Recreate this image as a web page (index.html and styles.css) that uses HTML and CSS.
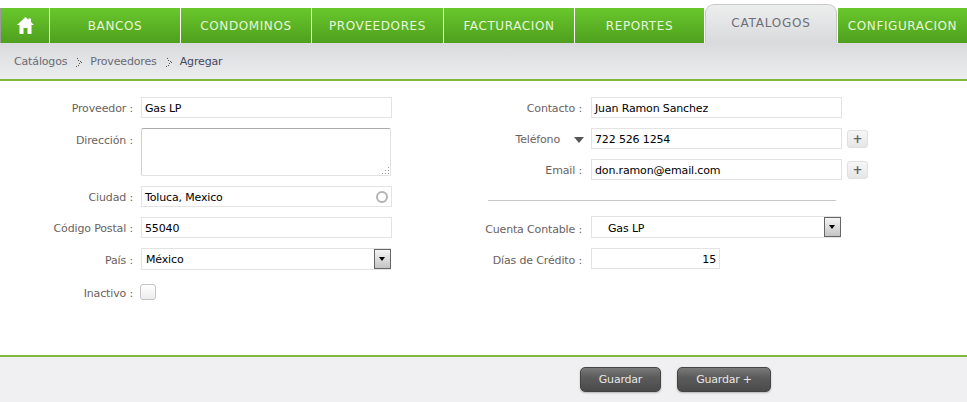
FILE: index.html
```html
<!DOCTYPE html>
<html lang="es">
  <head>
    <meta charset="UTF-8" />
    <title>Agregar proveedor</title>
    <link rel="stylesheet" href="styles.css">
  </head>
  <body>
    <nav class="nav">
      <a class="nav-item nav-home" href="#">
        <svg width="17" height="17" viewBox="0 0 17 17"><path d="M8.5 0 L11.5 2.7 V1.5 H14 V5 L17 8 H14.5 V17 H10.5 V11 H6.5 V17 H2.5 V8 H0 Z" fill="#fff"/></svg>
      </a>
      <a class="nav-item" href="#">BANCOS</a>
      <a class="nav-item" href="#">CONDOMINOS</a>
      <a class="nav-item" href="#">PROVEEDORES</a>
      <a class="nav-item" href="#">FACTURACION</a>
      <a class="nav-item" href="#">REPORTES</a>
      <a class="nav-item nav-active" href="#">CATALOGOS</a>
      <a class="nav-item nav-last" href="#">CONFIGURACION</a>
    </nav>

    <div class="crumbs">
      <a href="#">Catálogos</a>
      <svg class="crumb-sep" width="6" height="10" viewBox="0 0 6 10"><path d="M1 1h1v1H1zM2 3h1v1H2zM4 4h1v1H4zM5 5h1v1H5zM3 6h1v1H3zM2 8h1v1H2zM0 9h1v1H0z" fill="#555"/></svg>
      <a href="#">Proveedores</a>
      <svg class="crumb-sep" width="6" height="10" viewBox="0 0 6 10"><path d="M1 1h1v1H1zM2 3h1v1H2zM4 4h1v1H4zM5 5h1v1H5zM3 6h1v1H3zM2 8h1v1H2zM0 9h1v1H0z" fill="#555"/></svg>
      <span class="crumb-current">Agregar</span>
    </div>

    <form class="form">
      <div class="col col-left">
        <div class="row">
          <label class="lbl">Proveedor :</label>
          <div class="field w-full">Gas LP</div>
        </div>
        <div class="row row-top">
          <label class="lbl">Dirección :</label>
          <div class="area">
            <svg class="grip" width="9" height="9" viewBox="0 0 9 9"><path d="M7 1h1v1H7zM7 4h1v1H7zM4 4h1v1H4zM7 7h1v1H7zM4 7h1v1H4zM1 7h1v1H1z" fill="#999"/></svg>
          </div>
        </div>
        <div class="row">
          <label class="lbl">Ciudad :</label>
          <div class="field w-full field-city">Toluca, Mexico<span class="spin"></span></div>
        </div>
        <div class="row">
          <label class="lbl">Código Postal :</label>
          <div class="field w-full">55040</div>
        </div>
        <div class="row">
          <label class="lbl">País :</label>
          <div class="select w-select"><span class="select-text">México</span><span class="select-btn"></span></div>
        </div>
        <div class="row row-check">
          <label class="lbl">Inactivo :</label>
          <span class="check"></span>
        </div>
      </div>

      <div class="col col-right">
        <div class="row">
          <label class="lbl">Contacto :</label>
          <div class="field w-full">Juan Ramon Sanchez</div>
        </div>
        <div class="row">
          <label class="lbl lbl-phone">Teléfono <span class="caret"></span></label>
          <div class="field w-full">722 526 1254</div>
          <button class="plus" type="button">+</button>
        </div>
        <div class="row">
          <label class="lbl">Email :</label>
          <div class="field w-full">don.ramon@email.com</div>
          <button class="plus" type="button">+</button>
        </div>
        <hr class="sep" />
        <div class="row">
          <label class="lbl lbl-low">Cuenta Contable :</label>
          <div class="select w-select"><span class="select-text select-indent">Gas LP</span><span class="select-btn"></span></div>
        </div>
        <div class="row">
          <label class="lbl lbl-low">Días de Crédito :</label>
          <div class="field w-short">15</div>
        </div>
      </div>
    </form>

    <footer class="footer">
      <button class="btn btn-save" type="button">Guardar</button>
      <button class="btn btn-more" type="button">Guardar +</button>
    </footer>
  </body>
</html>
```

FILE: styles.css
```css
html,
body {
  margin: 0;
  padding: 0;
}
body {
  width: 967px;
  height: 402px;
  overflow: hidden;
  background: #fff;
  font-family: "DejaVu Sans", Verdana, sans-serif;
  font-size: 11px;
  color: #000;
  display: flex;
  flex-direction: column;
}

/* top nav */
.nav {
  display: flex;
  height: 35px;
  margin-top: 8px;
  padding-left: 1px;
}
.nav-item {
  display: flex;
  align-items: center;
  justify-content: center;
  width: 130px;
  border-right: 1px solid #fff;
  background: linear-gradient(#69c72c, #4fa01e);
  color: #e8f6d8;
  font-size: 12px;
  letter-spacing: 0.6px;
  text-decoration: none;
  padding-top: 1px;
  box-sizing: content-box;
}
.nav-home {
  width: 48px;
  border-left: 1px solid #9a9a9a;
  margin-left: -1px;
  padding-top: 0;
}
.nav-item:nth-child(4) {
  width: 131px;
}
.nav-item:nth-child(6) {
  width: 129px;
}
.nav-active {
  width: 132px;
  height: 39px;
  margin-top: -4px;
  margin-right: 1px;
  border: 1px solid #c8c8c8;
  border-bottom: none;
  border-radius: 9px 9px 0 0;
  background: linear-gradient(#eceded, #d9dadc);
  color: #6e6e78;
  letter-spacing: 0.8px;
  padding-top: 0;
  padding-bottom: 2px;
  box-sizing: border-box;
}
.nav-last {
  flex: 1;
  width: auto;
  border-right: none;
}

/* breadcrumb */
.crumbs {
  display: flex;
  align-items: center;
  height: 38px;
  padding: 1px 0 0 14px;
  box-sizing: border-box;
  background: linear-gradient(#d9dadc, #eceded);
  border-bottom: 2px solid #7fb83a;
  font-size: 11px;
  letter-spacing: -0.15px;
  color: #6a6a74;
}
.crumbs a {
  color: inherit;
  text-decoration: none;
}
.crumb-sep {
  margin: 0 8px 0 9px;
}
.crumb-current {
  color: #44485c;
}

/* form */
.form {
  flex: 1;
  display: flex;
  padding-top: 16px;
}
.col {
  display: flex;
  flex-direction: column;
  gap: 10px;
}
.col-left {
  width: 449px;
}
.row {
  display: flex;
  align-items: center;
}
.row-top {
  align-items: flex-start;
}
.row-check {
  margin-top: 4px;
}
.lbl {
  width: 133px;
  margin-right: 8px;
  padding-top: 2px;
  text-align: right;
  color: #6a625e;
  letter-spacing: -0.15px;
}
.col-right .lbl {
  margin-right: 9px;
}
.row-top .lbl {
  padding-top: 6px;
}
.col-right .lbl-low {
  padding-top: 4px;
}
.col-right .lbl-phone {
  display: flex;
  align-items: center;
  justify-content: flex-end;
  gap: 14px;
  width: 135px;
  margin-right: 7px;
}
.caret {
  width: 0;
  height: 0;
  border-left: 5px solid transparent;
  border-right: 5px solid transparent;
  border-top: 6px solid #555;
}
.field {
  box-sizing: border-box;
  height: 21px;
  line-height: 21px;
  border: 1px solid #e3e3e3;
  padding: 0 3px;
  background: #fff;
  color: #000;
  letter-spacing: -0.15px;
}
.w-full {
  width: 251px;
}
.w-select {
  width: 250px;
}
.w-short {
  width: 129px;
  text-align: right;
}
.field-city {
  display: flex;
  justify-content: space-between;
  align-items: center;
  padding-top: 2px;
  line-height: 17px;
}
.spin {
  width: 12px;
  height: 12px;
  margin-bottom: 2px;
  border: 2px solid #b3b3b3;
  border-radius: 50%;
  box-sizing: border-box;
}
.area {
  position: relative;
  box-sizing: border-box;
  width: 250px;
  height: 48px;
  border: 1px solid #e3e3e3;
  border-top-color: #aaa;
  border-left-color: #d0d0d0;
  border-radius: 2px;
}
.grip {
  position: absolute;
  right: 0;
  bottom: 0;
}
.select {
  box-sizing: border-box;
  height: 22px;
  display: flex;
  align-items: center;
  justify-content: space-between;
  border: 1px solid #e3e3e3;
  border-right: none;
}
.select-text {
  padding-left: 4px;
  letter-spacing: -0.15px;
}
.select-indent {
  padding: 2px 0 0 16px;
}
.select-btn {
  position: relative;
  box-sizing: border-box;
  width: 17px;
  height: 20px;
  border: 1px solid #666;
  background: linear-gradient(#f4f4f4, #c4c4c4);
}
.select-btn::after {
  content: "";
  position: absolute;
  left: 4px;
  top: 7px;
  border-left: 3px solid transparent;
  border-right: 3px solid transparent;
  border-top: 4px solid #000;
}
.check {
  box-sizing: border-box;
  width: 16px;
  height: 16px;
  margin-left: -1px;
  border: 1px solid #c4c4c4;
  border-radius: 3px;
  background: linear-gradient(#fff, #ececec);
}
.plus {
  box-sizing: border-box;
  width: 21px;
  height: 18px;
  margin-left: 5px;
  padding: 0;
  border: 1px solid #e0e0e0;
  border-radius: 3px;
  background: linear-gradient(#f6f6f6, #e6e6e6);
  color: #666;
  font-family: "DejaVu Sans", sans-serif;
  font-size: 12px;
  font-weight: bold;
  line-height: 14px;
}
.sep {
  box-sizing: border-box;
  width: 348px;
  height: 1px;
  margin: 10px 0 5px 39px;
  border: none;
  background: #c8c8c8;
}

/* footer */
.footer {
  display: flex;
  gap: 16px;
  height: 47px;
  padding: 10px 0 0 580px;
  box-sizing: border-box;
  background: #f0f0f2;
  border-top: 2px solid #7fb83a;
}
.btn {
  box-sizing: border-box;
  height: 25px;
  border: 1px solid #444;
  border-radius: 5px;
  background: linear-gradient(#7a7a7a, #5c5c5c 40%, #4a4a4a);
  color: #e8e8e8;
  font-family: "DejaVu Sans", sans-serif;
  font-size: 11px;
  letter-spacing: -0.2px;
  box-shadow: 0 1px 2px rgba(0, 0, 0, 0.25);
}
.btn-save {
  width: 81px;
}
.btn-more {
  width: 94px;
}
```
